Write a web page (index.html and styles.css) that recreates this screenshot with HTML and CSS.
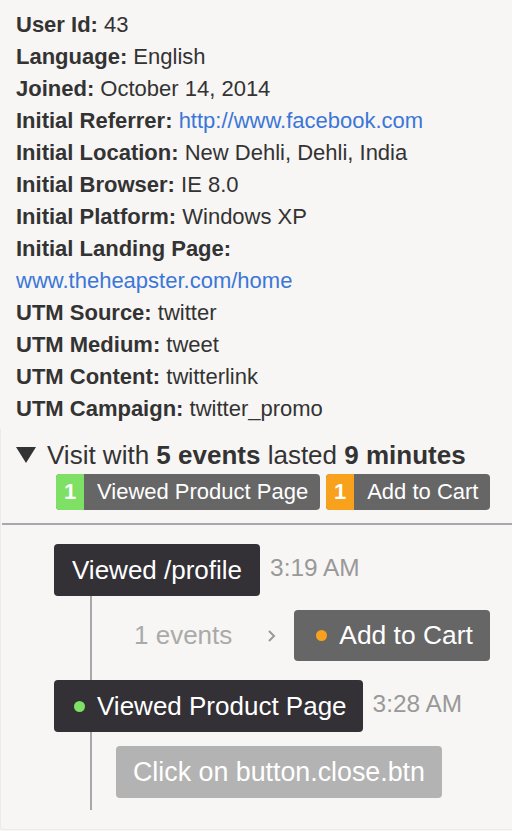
FILE: index.html
```html
<!DOCTYPE html>
<html>
<head>
<meta charset="utf-8">
<link rel="stylesheet" href="styles.css">
</head>
<body>
<div class="info">
  <div class="row"><b>User Id:</b> 43</div>
  <div class="row"><b>Language:</b> English</div>
  <div class="row"><b>Joined:</b> October 14, 2014</div>
  <div class="row"><b>Initial Referrer:</b> <a href="#">http://www.facebook.com</a></div>
  <div class="row"><b>Initial Location:</b> New Dehli, Dehli, India</div>
  <div class="row"><b>Initial Browser:</b> IE 8.0</div>
  <div class="row"><b>Initial Platform:</b> Windows XP</div>
  <div class="row"><b>Initial Landing Page:</b></div>
  <div class="row"><a href="#">www.theheapster.com/home</a></div>
  <div class="row"><b>UTM Source:</b> twitter</div>
  <div class="row"><b>UTM Medium:</b> tweet</div>
  <div class="row"><b>UTM Content:</b> twitterlink</div>
  <div class="row"><b>UTM Campaign:</b> twitter_promo</div>
</div>
<div class="panel">
  <div class="visit-head">
    <span class="tri"></span>
    <span>Visit with <b>5 events</b> lasted <b>9 minutes</b></span>
  </div>
  <div class="badges">
    <div class="badge"><span class="num green">1</span><span class="lbl">Viewed Product Page</span></div>
    <div class="badge"><span class="num orange">1</span><span class="lbl">Add to Cart</span></div>
  </div>
  <div class="divider"></div>
  <div class="timeline">
    <div class="event">
      <div class="event-head">
        <div class="ebox">Viewed /profile</div>
        <div class="time">3:19 AM</div>
      </div>
      <div class="sub sub1">
        <span class="count">1 events</span>
        <svg class="chev" width="10" height="14" viewBox="0 0 10 14"><path d="M2 2 L7 7 L2 12" fill="none" stroke="#999" stroke-width="2"/></svg>
        <div class="gbox"><span class="dot orange"></span>Add to Cart</div>
      </div>
    </div>
    <div class="event">
      <div class="event-head">
        <div class="ebox ebox2"><span class="dot green"></span>Viewed Product Page</div>
        <div class="time">3:28 AM</div>
      </div>
      <div class="sub sub2">
        <div class="lbox">Click on button.close.btn</div>
      </div>
    </div>
  </div>
</div>
</body>
</html>
```
FILE: styles.css
```css
html, body {
  margin: 0;
  padding: 0;
  background: #f7f6f4;
}
body {
  font-family: "Liberation Sans", Arial, sans-serif;
  color: #333333;
  width: 512px;
  height: 831px;
  overflow: hidden;
}
.info {
  padding: 9px 0 0 16px;
}
.row {
  font-size: 22px;
  line-height: 32px;
  white-space: nowrap;
}
.row b {
  font-weight: bold;
}
.row a {
  color: #3b77d8;
  text-decoration: none;
}
.panel {
  margin-top: 4px;
  border-left: 1px solid #ecebe9;
  border-bottom: 1px solid #ecebe9;
  border-radius: 0 0 0 3px;
  padding-top: 11px;
  height: 401px;
  box-sizing: border-box;
}
.visit-head {
  display: flex;
  align-items: center;
  padding-left: 15px;
  font-size: 26px;
  line-height: 30px;
  color: #333;
  white-space: nowrap;
}
.tri {
  width: 0;
  height: 0;
  border-left: 10px solid transparent;
  border-right: 10px solid transparent;
  border-top: 16px solid #333;
  margin-right: 11px;
}
.badges {
  display: flex;
  gap: 6px;
  margin: 4px 0 0 55px;
}
.badge {
  display: flex;
  height: 36px;
  border-radius: 4px;
  overflow: hidden;
  background: #666666;
  color: #fff;
  font-size: 22px;
  line-height: 36px;
  white-space: nowrap;
}
.num {
  width: 28px;
  text-align: center;
  font-weight: bold;
}
.num.green { background: #7ee064; }
.num.orange { background: #f7a11d; }
.lbl {
  padding: 0 12px 0 13px;
}
.divider {
  margin-top: 13px;
  margin-left: 1px;
  height: 2px;
  background: #a6a8ae;
}
.timeline {
  padding: 19px 0 0 53px;
}
.event-head {
  display: flex;
  align-items: center;
  gap: 10px;
}
.ebox {
  display: flex;
  align-items: center;
  height: 52px;
  padding: 0 18px;
  background: #333036;
  color: #fff;
  border-radius: 4px;
  font-size: 26px;
  white-space: nowrap;
}
.ebox2 {
  padding: 0 16px 0 20px;
}
.time {
  font-size: 24.4px;
  color: #999;
  margin-top: -4px;
  white-space: nowrap;
}
.dot {
  width: 11px;
  height: 11px;
  border-radius: 50%;
  margin-right: 12px;
  flex: none;
}
.dot.green { background: #7ee064; }
.dot.orange { background: #f7a11d; }
.sub {
  margin-left: 36px;
  border-left: 2px solid #a6a8ae;
  display: flex;
  align-items: center;
}
.sub1 {
  padding: 14px 0 19px 42px;
}
.sub2 {
  padding: 14px 0 12px 24px;
}
.count {
  font-size: 26px;
  color: #aaa;
  white-space: nowrap;
}
.chev {
  margin: 0 17px 0 35px;
  flex: none;
}
.gbox {
  display: flex;
  align-items: center;
  height: 51px;
  padding: 0 17px 0 22px;
  background: #666666;
  color: #fff;
  border-radius: 4px;
  font-size: 26.4px;
  white-space: nowrap;
}
.lbox {
  display: flex;
  align-items: center;
  height: 52px;
  padding: 0 17px;
  background: #b3b3b3;
  color: #fff;
  border-radius: 4px;
  font-size: 26.8px;
  white-space: nowrap;
}
```
